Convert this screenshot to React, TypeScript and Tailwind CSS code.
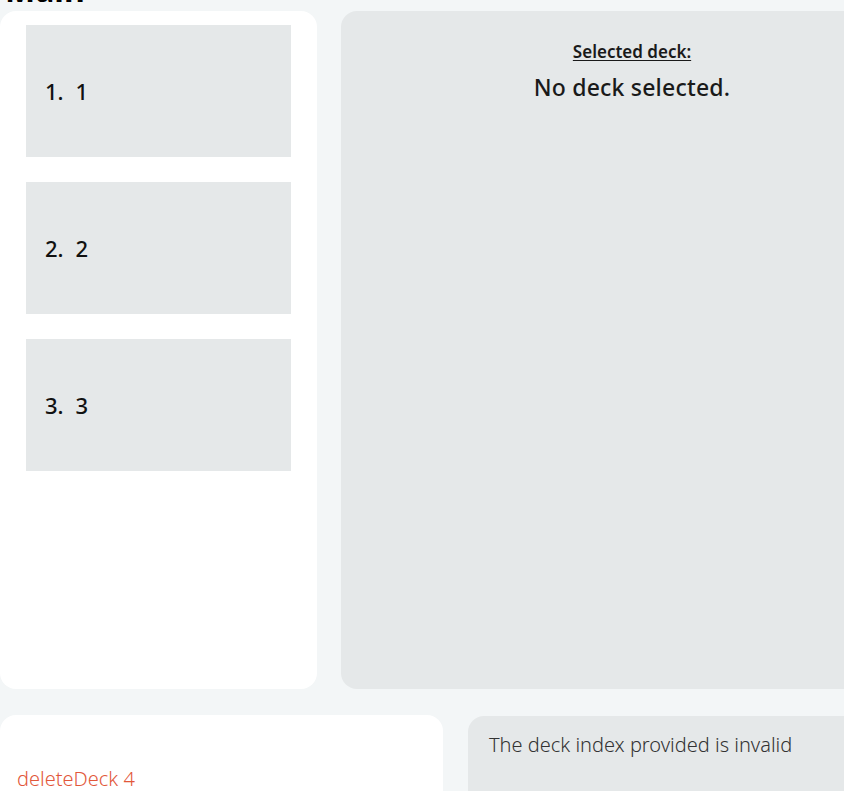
import React from "react";

const decks = ["1", "2", "3"];

function DeckList() {
  return (
    <div className="w-[317px] h-[678px] bg-white rounded-2xl pt-[14px] pl-[26px] flex flex-col gap-[25px] shrink-0">
      {decks.map((name, i) => (
        <div
          key={name}
          className="w-[265px] h-[132px] bg-[#e5e8e9] flex items-center pl-[19px] text-[22px] font-medium text-[#111] pt-[1px]"
        >
          <span>{i + 1}.</span>
          <span className="ml-[12px]">{name}</span>
        </div>
      ))}
    </div>
  );
}

function SelectedDeck() {
  return (
    <div className="w-[582px] h-[678px] bg-[#e5e8e9] rounded-2xl shrink-0 flex flex-col items-center pt-[29px] text-[#1a1a1a]">
      <div className="text-[17px] font-semibold underline underline-offset-2 leading-[24px]">Selected deck:</div>
      <div className="text-[23px] font-medium leading-[30px] mt-[8px] tracking-[0.2px]">No deck selected.</div>
    </div>
  );
}

export default function App() {
  return (
    <div
      className="w-[844px] h-[791px] overflow-hidden bg-[#f3f6f7]"
      style={{ fontFamily: "'Noto Sans', 'Open Sans', sans-serif" }}
    >
      <h1 className="text-[32px] font-bold leading-[40px] mt-[-30px] ml-[5px] text-black">Main</h1>
      <div className="flex gap-[24px] mt-[1px]">
        <DeckList />
        <SelectedDeck />
      </div>
      <div className="flex gap-[25px] mt-[26px]">
        <div className="w-[443px] h-[120px] bg-white rounded-t-2xl shrink-0 flex flex-col justify-start pt-[50px] pl-[17px]">
          <div className="text-[20px] font-light text-[#e2573a] leading-[28px]">deleteDeck 4</div>
        </div>
        <div className="w-[420px] h-[120px] bg-[#e5e8e9] rounded-tl-2xl shrink-0 mt-[1px] pt-[15px] pl-[21px]">
          <div className="text-[20px] font-light text-[#333] leading-[28px]">The deck index provided is invalid</div>
        </div>
      </div>
    </div>
  );
}
